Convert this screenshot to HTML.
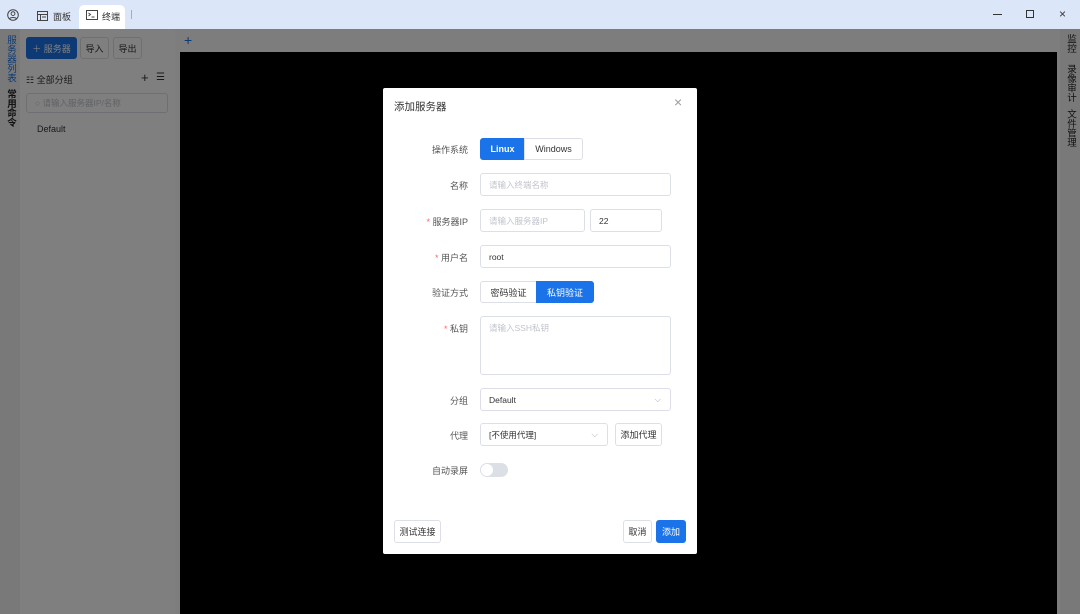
<!DOCTYPE html>
<html><head><meta charset="utf-8"><style>
*{box-sizing:border-box;margin:0;padding:0}
body{width:1080px;height:614px;overflow:hidden;font-family:"Liberation Sans","Noto Sans CJK SC",sans-serif;font-size:9px;color:#333;background:#fff;position:relative}
.abs{position:absolute}
.title{left:0;top:0;width:1080px;height:29px;background:#dce6f9}
.tab{top:4px;height:24px;display:flex;align-items:center;font-size:9px;color:#333}
.ov{left:0;top:29px;width:1080px;height:585px;background:rgba(0,0,0,.5)}
.btn{border:1px solid #dcdfe6;border-radius:3px;background:#fff;display:flex;align-items:center;justify-content:center;font-size:9px;color:#333}
.inp{border:1px solid #dcdfe6;border-radius:3px;background:#fff;display:flex;align-items:center;padding-left:8px;font-size:8.5px;color:#c0c4cc}
.lbl{right:0;width:85px;text-align:right;font-size:9px;color:#555}
.red{color:#f56c6c}
.vt{writing-mode:vertical-rl;font-size:9.5px;line-height:10px}
</style></head><body>
<div class="abs title"></div>
<svg class="abs" style="left:7px;top:9px" width="12" height="12" viewBox="0 0 12 12"><circle cx="6" cy="6" r="5.3" fill="none" stroke="#444" stroke-width="1"/><circle cx="6" cy="4.6" r="1.9" fill="none" stroke="#444"/><path d="M2.5 9.8c1-1.8 6-1.8 7 0" fill="none" stroke="#444"/></svg>
<div class="abs tab" style="left:37px"><svg width="11" height="10" viewBox="0 0 11 10"><rect x=".5" y=".5" width="10" height="9" fill="none" stroke="#444"/><path d="M.5 3.5h10M3.5 3.5v6M5 6h4" stroke="#444"/></svg><span style="margin-left:5px">面板</span></div>
<div class="abs tab" style="left:79px;top:5px;width:46px;background:#fff;border-radius:5px 5px 0 0;padding-left:7px;align-items:flex-start;padding-top:5px"><svg width="12" height="10" viewBox="0 0 12 10"><rect x=".5" y=".5" width="11" height="9" fill="none" stroke="#444"/><path d="M2.5 3l2 1.5-2 1.5M5.5 7h3" fill="none" stroke="#444"/></svg><span style="margin-left:4px">终端</span></div>
<div class="abs" style="left:131px;top:10px;width:1px;height:9px;background:#aab"></div>
<div class="abs" style="left:993px;top:14px;width:9px;height:1px;background:#333"></div>
<div class="abs" style="left:1026px;top:10px;width:8px;height:8px;border:1px solid #333"></div>
<div class="abs" style="left:1059px;top:7px;font-size:12px;color:#333">×</div>

<div class="abs" style="left:0;top:29px;width:20px;height:585px;background:#f3f3f3"></div>
<div class="abs vt" style="left:5px;top:35px;color:#1a73e8">服务器列表</div>
<div class="abs vt" style="left:5px;top:89px;color:#222;font-weight:bold">常用命令</div>
<div class="abs" style="left:20px;top:29px;width:155px;height:585px;background:#fff"></div>
<div class="abs btn" style="left:26px;top:37px;width:51px;height:22px;background:#1a73e8;border-color:#1a73e8;color:#fff">＋ 服务器</div>
<div class="abs btn" style="left:80px;top:37px;width:29px;height:22px">导入</div>
<div class="abs btn" style="left:113px;top:37px;width:29px;height:22px">导出</div>
<div class="abs" style="left:26px;top:73px;font-size:9px;color:#333">☷ 全部分组</div>
<div class="abs" style="left:141px;top:70px;font-size:13px;color:#333">+</div>
<div class="abs" style="left:156px;top:72px;font-size:10px;color:#333">☰</div>
<div class="abs inp" style="left:26px;top:93px;width:142px;height:20px">○ 请输入服务器IP/名称</div>
<div class="abs" style="left:37px;top:124px;color:#333">Default</div>
<div class="abs" style="left:175px;top:29px;width:885px;height:585px;background:#fafafa"></div>
<div class="abs" style="left:184px;top:32px;font-size:14px;color:#1a73e8">+</div>
<div class="abs" style="left:180px;top:52px;width:877px;height:562px;background:#000"></div>
<div class="abs" style="left:1060px;top:29px;width:20px;height:585px;background:#f3f3f3"></div>
<div class="abs vt" style="left:1065px;top:34px;color:#222">监控</div>
<div class="abs vt" style="left:1065px;top:64px;color:#222">录像审计</div>
<div class="abs vt" style="left:1065px;top:109px;color:#222">文件管理</div>

<div class="abs ov"></div>

<div class="abs" style="left:383px;top:88px;width:314px;height:466px;background:#fff;border-radius:2px">
<div class="abs" style="left:11px;top:11px;font-size:10.5px;color:#333">添加服务器</div>
<div class="abs" style="left:291px;top:6px;font-size:14px;color:#999">×</div>
<div class="abs lbl" style="left:0;top:55px">操作系统</div>
<div class="abs btn" style="left:97px;top:50px;width:45px;height:22px;background:#1a73e8;border-color:#1a73e8;color:#fff;border-radius:3px 0 0 3px;font-weight:bold">Linux</div>
<div class="abs btn" style="left:141px;top:50px;width:59px;height:22px;border-radius:0 3px 3px 0">Windows</div>
<div class="abs lbl" style="left:0;top:91px">名称</div>
<div class="abs inp" style="left:97px;top:85px;width:191px;height:23px">请输入终端名称</div>
<div class="abs lbl" style="left:0;top:127px"><span class="red">* </span>服务器IP</div>
<div class="abs inp" style="left:97px;top:121px;width:105px;height:23px">请输入服务器IP</div>
<div class="abs inp" style="left:207px;top:121px;width:72px;height:23px;color:#333">22</div>
<div class="abs lbl" style="left:0;top:163px"><span class="red">* </span>用户名</div>
<div class="abs inp" style="left:97px;top:157px;width:191px;height:23px;color:#333">root</div>
<div class="abs lbl" style="left:0;top:198px">验证方式</div>
<div class="abs btn" style="left:97px;top:193px;width:57px;height:22px;border-radius:3px 0 0 3px">密码验证</div>
<div class="abs btn" style="left:153px;top:193px;width:58px;height:22px;background:#1a73e8;border-color:#1a73e8;color:#fff;border-radius:0 3px 3px 0">私钥验证</div>
<div class="abs lbl" style="left:0;top:234px"><span class="red">* </span>私钥</div>
<div class="abs inp" style="left:97px;top:228px;width:191px;height:59px;align-items:flex-start;padding-top:5px">请输入SSH私钥</div>
<div class="abs lbl" style="left:0;top:306px">分组</div>
<div class="abs inp" style="left:97px;top:300px;width:191px;height:23px;color:#333">Default<span style="position:absolute;right:9px;color:#aaa">⌵</span></div>
<div class="abs lbl" style="left:0;top:341px">代理</div>
<div class="abs inp" style="left:97px;top:335px;width:128px;height:23px;color:#333">[不使用代理]<span style="position:absolute;right:9px;color:#aaa">⌵</span></div>
<div class="abs btn" style="left:232px;top:335px;width:47px;height:23px">添加代理</div>
<div class="abs lbl" style="left:0;top:376px">自动录屏</div>
<div class="abs" style="left:97px;top:375px;width:28px;height:14px;border-radius:7px;background:#dcdfe6"><div style="position:absolute;left:1px;top:1px;width:12px;height:12px;border-radius:50%;background:#fff"></div></div>
<div class="abs btn" style="left:11px;top:432px;width:47px;height:23px">测试连接</div>
<div class="abs btn" style="left:240px;top:432px;width:29px;height:23px">取消</div>
<div class="abs btn" style="left:273px;top:432px;width:30px;height:23px;background:#1a73e8;border-color:#1a73e8;color:#fff">添加</div>
</div>
</body></html>
